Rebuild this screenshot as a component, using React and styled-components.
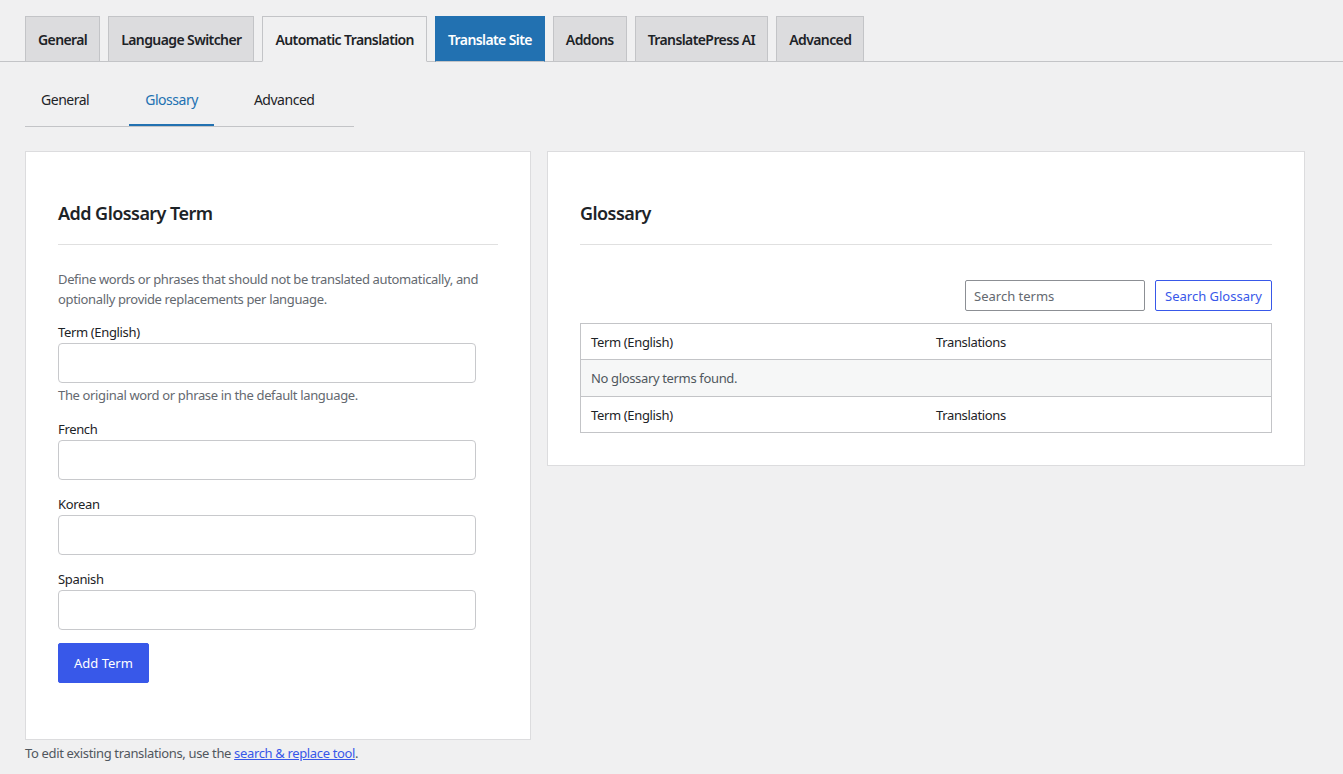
import React from 'react';
import styled, { createGlobalStyle } from 'styled-components';

const GlobalStyle = createGlobalStyle`
  html, body {
    margin: 0;
    padding: 0;
    background: #f0f0f1;
  }
  body {
    font-family: "Noto Sans", "Open Sans", sans-serif;
    font-size: 13px;
    letter-spacing: -0.35px;
    color: #1d2327;
  }
  * {
    box-sizing: border-box;
  }
`;

const MAIN_TABS = [
  { label: 'General' },
  { label: 'Language Switcher' },
  { label: 'Automatic Translation', active: true },
  { label: 'Translate Site', highlight: true },
  { label: 'Addons' },
  { label: 'TranslatePress AI' },
  { label: 'Advanced' },
];

const SUB_TABS = [
  { label: 'General' },
  { label: 'Glossary', active: true },
  { label: 'Advanced' },
];

const LANGUAGES = ['French', 'Korean', 'Spanish'];

const Page = styled.div`
  min-height: 774px;
`;

const TabBar = styled.nav`
  display: flex;
  gap: 8px;
  padding: 16px 25px 0;
  border-bottom: 1px solid #c3c4c7;
`;

const Tab = styled.a`
  display: flex;
  align-items: center;
  height: 46px;
  margin-bottom: -1px;
  padding: 0 12px;
  font-size: 14px;
  font-weight: 600;
  letter-spacing: -0.6px;
  color: ${(p) => (p.$highlight ? '#ffffff' : '#1d2327')};
  background: ${(p) =>
    p.$highlight ? '#2271b1' : p.$active ? '#f0f0f1' : '#dcdcde'};
  border: 1px solid ${(p) => (p.$highlight ? '#2271b1' : '#c3c4c7')};
  border-bottom-color: ${(p) => (p.$active ? '#f0f0f1' : '#c3c4c7')};
  text-decoration: none;
  white-space: nowrap;
`;

const Content = styled.div`
  padding: 0 25px;
`;

const SubTabs = styled.div`
  display: inline-flex;
  margin-top: 14px;
  padding-right: 24px;
  border-bottom: 1px solid #c3c4c7;
`;

const SubTab = styled.a`
  margin-right: 24px;
  padding: 14px 16px 14px;
  font-size: 14px;
  line-height: 20px;
  letter-spacing: -0.48px;
  color: ${(p) => (p.$active ? '#2271b1' : '#1d2327')};
  border-bottom: 2px solid ${(p) => (p.$active ? '#2271b1' : 'transparent')};
  text-decoration: none;
  &:last-child {
    margin-right: 0;
  }
`;

const Columns = styled.div`
  display: flex;
  align-items: flex-start;
  gap: 16px;
  margin-top: 24px;
`;

const Card = styled.section`
  width: ${(p) => p.$width}px;
  padding: 0 32px 32px;
  background: #ffffff;
  border: 1px solid #dcdcde;
`;

const CardTitle = styled.h2`
  margin: 17px 0 0;
  padding: 32px 0 19px;
  font-size: 18px;
  line-height: 24px;
  font-weight: 600;
  letter-spacing: -0.55px;
  color: #1d2327;
  border-bottom: 1px solid #e0e0e0;
`;

const Description = styled.p`
  margin: 25px 0 0;
  font-size: 13px;
  line-height: 19.5px;
  color: #646970;
`;

const Field = styled.div`
  margin-top: ${(p) => p.$gap}px;
`;

const Label = styled.label`
  display: block;
  font-size: 13px;
  line-height: 20px;
  color: #1d2327;
`;

const TextInput = styled.input`
  display: block;
  width: 95%;
  height: 40px;
  margin-top: 1px;
  padding: 0 10px;
  border: 1px solid #c8c9cc;
  border-radius: 4px;
  font: inherit;
  background: #ffffff;
`;

const Help = styled.p`
  margin: 3px 0 0;
  font-size: 13px;
  line-height: 18.5px;
  color: #646970;
`;

const PrimaryButton = styled.button`
  height: 40px;
  margin: 13px 0 24px;
  padding: 0 15px;
  font: inherit;
  font-size: 13px;
  color: #ffffff;
  background: #3858e9;
  border: 1px solid #3858e9;
  border-radius: 2px;
`;

const SearchRow = styled.div`
  display: flex;
  justify-content: flex-end;
  gap: 10px;
  margin-top: 35px;
`;

const SearchInput = styled.input`
  width: 180px;
  height: 31px;
  padding: 0 8px;
  font: inherit;
  font-size: 13px;
  border: 1px solid #8c8f94;
  border-radius: 2px;
  &::placeholder {
    color: #646970;
  }
`;

const OutlineButton = styled.button`
  height: 31px;
  padding: 0 9px;
  font: inherit;
  font-size: 13px;
  color: #3858e9;
  background: #ffffff;
  border: 1px solid #3858e9;
  border-radius: 2px;
`;

const Table = styled.table`
  width: 100%;
  margin-top: 12px;
  border-collapse: collapse;
  border: 1px solid #c3c4c7;
  font-size: 13px;
`;

const Row = styled.tr`
  background: ${(p) => (p.$muted ? '#f6f7f7' : '#ffffff')};
  border-top: 1px solid #c3c4c7;
`;

const Cell = styled.td`
  width: 50%;
  height: ${(p) => p.$height || 36}px;
  padding: 0 10px;
  font-weight: 400;
  color: ${(p) => (p.$muted ? '#50575e' : '#1d2327')};
  text-align: left;
`;

const Footer = styled.p`
  margin: 4px 0 0;
  font-size: 13px;
  line-height: 19.5px;
  color: #50575e;
  a {
    color: #3858e9;
    text-decoration: underline;
  }
`;

export default function App() {
  return (
    <Page>
      <GlobalStyle />
      <TabBar>
        {MAIN_TABS.map((t) => (
          <Tab key={t.label} $active={t.active} $highlight={t.highlight}>
            {t.label}
          </Tab>
        ))}
      </TabBar>
      <Content>
        <SubTabs>
          {SUB_TABS.map((t) => (
            <SubTab key={t.label} $active={t.active}>
              {t.label}
            </SubTab>
          ))}
        </SubTabs>
        <Columns>
          <Card $width={506}>
            <CardTitle>Add Glossary Term</CardTitle>
            <Description>
              Define words or phrases that should not be translated automatically, and
              optionally provide replacements per language.
            </Description>
            <Field $gap={13}>
              <Label>Term (English)</Label>
              <TextInput type="text" />
              <Help>The original word or phrase in the default language.</Help>
            </Field>
            {LANGUAGES.map((lang) => (
              <Field key={lang} $gap={14}>
                <Label>{lang}</Label>
                <TextInput type="text" />
              </Field>
            ))}
            <PrimaryButton>Add Term</PrimaryButton>
          </Card>
          <Card $width={758}>
            <CardTitle>Glossary</CardTitle>
            <SearchRow>
              <SearchInput type="text" placeholder="Search terms" />
              <OutlineButton>Search Glossary</OutlineButton>
            </SearchRow>
            <Table>
              <thead>
                <Row>
                  <Cell as="th">Term (English)</Cell>
                  <Cell as="th">Translations</Cell>
                </Row>
              </thead>
              <tbody>
                <Row $muted>
                  <Cell colSpan={2} $muted $height={37}>
                    No glossary terms found.
                  </Cell>
                </Row>
              </tbody>
              <tfoot>
                <Row>
                  <Cell as="th">Term (English)</Cell>
                  <Cell as="th">Translations</Cell>
                </Row>
              </tfoot>
            </Table>
          </Card>
        </Columns>
        <Footer>
          To edit existing translations, use the <a href="#">search &amp; replace tool</a>.
        </Footer>
      </Content>
    </Page>
  );
}
